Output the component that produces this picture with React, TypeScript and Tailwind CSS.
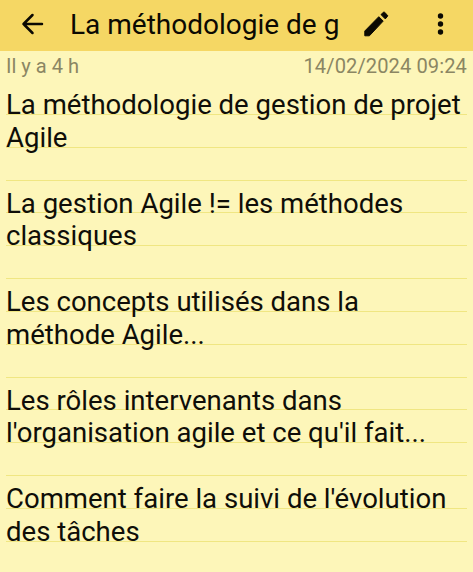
const lines = [
  "La méthodologie de gestion de projet",
  "Agile",
  "",
  "La gestion Agile != les méthodes",
  "classiques",
  "",
  "Les concepts utilisés dans la",
  "méthode Agile...",
  "",
  "Les rôles intervenants dans",
  "l'organisation agile et ce qu'il fait...",
  "",
  "Comment faire la suivi de l'évolution",
  "des tâches",
];

export default function App() {
  return (
    <div className="h-[572px] w-[473px] overflow-hidden bg-[#fdf6b9] font-['Roboto',sans-serif] text-[#0f0e08]">
      <header className="flex h-[51px] items-center bg-[#f5d764] pb-[3px] text-[#0b0902]">
        <svg className="ml-4 size-8 shrink-0" viewBox="0 0 32 32" fill="none" stroke="currentColor" strokeWidth="2.5" strokeLinecap="round" strokeLinejoin="round">
          <path d="M16.5 7 7.5 16 16.5 25M7.5 16H26" />
        </svg>
        <div className="ml-[22px] w-[275px] overflow-hidden pt-[2px] text-[28px] leading-[46px] whitespace-nowrap">La méthodologie de g</div>
        <svg className="ml-[15px] size-8 shrink-0" viewBox="0 0 32 32" fill="currentColor" stroke="currentColor" strokeWidth="1" strokeLinejoin="round">
          <path d="M4.8 27.8V23L18.8 8.7 23.2 13.1 9.4 27.8ZM21 6.6 23.4 4.3Q24.1 3.8 24.7 4.4L27.5 7.2Q28 7.9 27.4 8.5L25.3 10.9Z" />
        </svg>
        <svg className="ml-8 size-8 shrink-0" viewBox="0 0 32 32" fill="currentColor">
          <circle cx="16.5" cy="8" r="2.7" /><circle cx="16.5" cy="16" r="2.7" /><circle cx="16.5" cy="24" r="2.7" />
        </svg>
      </header>
      <div className="flex h-[31px] items-center justify-between px-1.5 text-[20.1px] text-[#8b8663]">
        <span>Il y a 4 h</span><span className="tracking-[0.1px]">14/02/2024 09:24</span>
      </div>
      <main className="px-1.5">
        {lines.map((text, i) => (
          <p key={i} className="h-[32.85px] border-b border-[#f0e682] text-[27.56px] leading-[46px] whitespace-nowrap">{text}</p>
        ))}
      </main>
    </div>
  );
}
